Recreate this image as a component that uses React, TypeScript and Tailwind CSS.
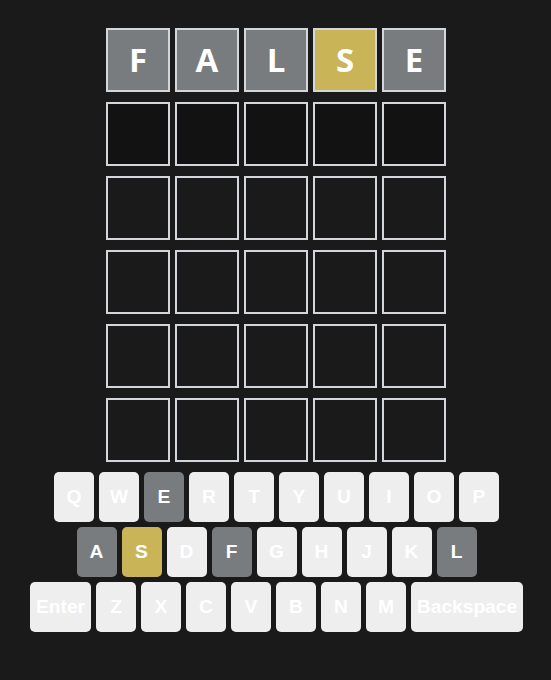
import React from "react";

type S = "absent" | "present" | "correct" | "empty";

const tileBg: Record<S, string> = {
  absent: "bg-[#787c7e]",
  present: "bg-[#c9b458]",
  correct: "bg-[#6aaa64]",
  empty: "bg-transparent",
};

function Tile({ letter, state, active }: { letter?: string; state: S; active?: boolean }) {
  return (
    <div
      className={`w-[64px] h-[64px] border-2 border-[#d3d6da] flex items-center justify-center text-white font-bold text-[33px] ${
        state === "empty" ? (active ? "bg-[#121212]" : "bg-transparent") : tileBg[state]
      }`}
      style={{ fontFamily: '"Open Sans", "Noto Sans", sans-serif' }}
    >
      {letter}
    </div>
  );
}

const keyColor: Record<string, string> = {
  E: "bg-[#787c7e]",
  A: "bg-[#787c7e]",
  F: "bg-[#787c7e]",
  L: "bg-[#787c7e]",
  S: "bg-[#c9b458]",
};

function Key({ label, w = 40 }: { label: string; w?: number }) {
  const bg = keyColor[label] ?? "bg-[#eeeeee]";
  return (
    <div
      className={`h-[50px] rounded-[5px] flex items-center justify-center text-white font-bold text-[19.2px] ${bg} ${
        w === 40 ? "w-[40px]" : w === 61 ? "w-[61px]" : "w-[112px]"
      }`}
      style={{ fontFamily: '"Liberation Sans", Arial, sans-serif' }}
    >
      {label}
    </div>
  );
}

export default function App() {
  const guess = ["F", "A", "L", "S", "E"];
  const states: S[] = ["absent", "absent", "absent", "present", "absent"];
  const rows1 = "QWERTYUIOP".split("");
  const rows2 = "ASDFGHJKL".split("");
  const rows3 = "ZXCVBNM".split("");
  return (
    <div className="min-h-[680px] w-full bg-[#1a1a1a] flex flex-col items-center pt-[28px]">
      <div className="flex flex-col gap-[10px] ml-[1px]">
        <div className="flex gap-[5px]">
          {guess.map((l, i) => (
            <Tile key={i} letter={l} state={states[i]} />
          ))}
        </div>
        {[0, 1, 2, 3, 4].map((r) => (
          <div key={r} className="flex gap-[5px]">
            {[0, 1, 2, 3, 4].map((c) => (
              <Tile key={c} state="empty" active={r === 0} />
            ))}
          </div>
        ))}
      </div>
      <div className="flex flex-col items-center gap-[5px] mt-[10px] ml-[2px]">
        <div className="flex gap-[5px]">
          {rows1.map((k) => (
            <Key key={k} label={k} />
          ))}
        </div>
        <div className="flex gap-[5px]">
          {rows2.map((k) => (
            <Key key={k} label={k} />
          ))}
        </div>
        <div className="flex gap-[5px]">
          <Key label="Enter" w={61} />
          {rows3.map((k) => (
            <Key key={k} label={k} />
          ))}
          <Key label="Backspace" w={112} />
        </div>
      </div>
    </div>
  );
}
